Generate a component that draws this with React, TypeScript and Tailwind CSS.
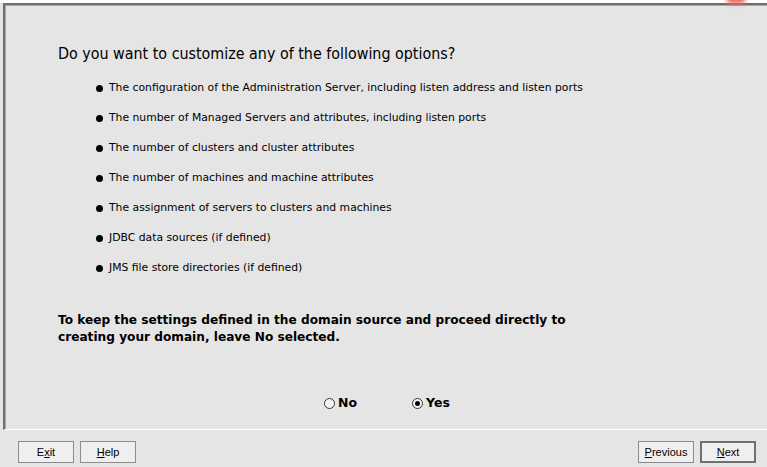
import { useState } from "react"

const options = [
  "The configuration of the Administration Server, including listen address and listen ports",
  "The number of Managed Servers and attributes, including listen ports",
  "The number of clusters and cluster attributes",
  "The number of machines and machine attributes",
  "The assignment of servers to clusters and machines",
  "JDBC data sources (if defined)",
  "JMS file store directories (if defined)",
]

function Radio({ checked, label, onClick }: { checked: boolean; label: string; onClick: () => void }) {
  return (
    <button onClick={onClick} className="flex items-center gap-[3px] text-[12.5px] font-bold text-black">
      <span className="w-[11px] h-[11px] rounded-full border border-[#333] bg-[#f4f4f4] flex items-center justify-center">
        {checked && <span className="w-[5px] h-[5px] rounded-full bg-black" />}
      </span>
      {label}
    </button>
  )
}

function WizButton({ children, primary }: { children: React.ReactNode; primary?: boolean }) {
  return (
    <button
      className={
        "h-[22px] w-[56px] bg-[#efefef] text-[11px] text-black flex items-center justify-center " +
        (primary ? "border-2 border-[#707070]" : "border border-[#8c8c8c]")
      }
    >
      {children}
    </button>
  )
}

export default function App() {
  const [choice, setChoice] = useState<"no" | "yes">("yes")

  return (
    <div
      className="relative w-[767px] h-[467px] bg-[#e5e5e5] overflow-hidden flex flex-col"
      style={{ fontFamily: '"DejaVu Sans", "Liberation Sans", sans-serif' }}
    >
      {/* red logo edge peeking in at the top */}
      <div className="absolute left-[726px] top-[-8px] w-[20px] h-[12px] rounded-full bg-[#f07060] blur-[2px]" />

      <div className="h-[3px] bg-white shrink-0" />

      {/* main panel */}
      <div className="flex h-[427px] shrink-0">
        <div className="w-[3px] shrink-0" />
        <div className="flex-1 flex flex-col border-t-2 border-l-2 border-[#6e6e6e] border-b border-b-white shadow-[inset_1px_1px_0_#a8a8a8] pl-[53px]">
          <h2 className="mt-[40px] text-[15.9px] text-black leading-[17px] font-stretch-condensed">
            Do you want to customize any of the following options?
          </h2>

          <ul className="mt-[18px] ml-[38px] flex flex-col gap-[14px]">
            {options.map((o) => (
              <li key={o} className="flex items-center gap-[6px] h-[16px] text-[10.8px] text-black">
                <span className="w-[7px] h-[7px] rounded-full bg-black shrink-0" />
                {o}
              </li>
            ))}
          </ul>

          <p className="mt-[36px] text-[12.15px] font-bold leading-[17px] text-black">
            To keep the settings defined in the domain source and proceed directly to
            <br />
            creating your domain, leave No selected.
          </p>

          <div className="mt-[48px] ml-[266px] flex items-center gap-[55px]">
            <Radio checked={choice === "no"} label="No" onClick={() => setChoice("no")} />
            <Radio checked={choice === "yes"} label="Yes" onClick={() => setChoice("yes")} />
          </div>
        </div>
      </div>

      {/* footer buttons */}
      <div className="flex items-center px-[18px] pt-[11px]" style={{ fontFamily: '"Liberation Sans", sans-serif' }}>
        <div className="flex gap-[6px]">
          <WizButton>E<u>x</u>it</WizButton>
          <WizButton><u>H</u>elp</WizButton>
        </div>
        <div className="ml-auto flex gap-[6px] mr-[-7px]">
          <WizButton><u>P</u>revious</WizButton>
          <WizButton primary><u>N</u>ext</WizButton>
        </div>
      </div>
    </div>
  )
}
